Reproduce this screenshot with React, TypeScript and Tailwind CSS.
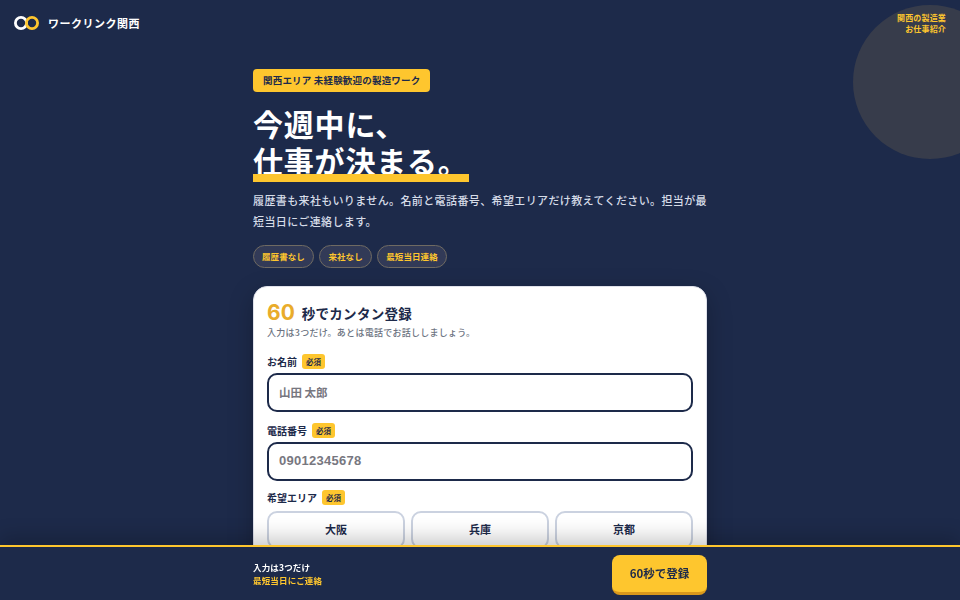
const jp = "font-['Noto_Sans_CJK_JP','Noto_Sans',sans-serif]";

function Logo() {
  return (
    <svg width="25" height="14" viewBox="0 0 25 14" fill="none">
      <circle cx="7" cy="7" r="5.6" stroke="#ffffff" strokeWidth="2.8" />
      <circle cx="18" cy="7" r="5.6" stroke="#fec62e" strokeWidth="2.8" />
    </svg>
  );
}

function Required() {
  return (
    <span className="flex h-[15px] w-[23px] items-center justify-center rounded-[3px] bg-[#fec62e] text-[7.5px] font-bold text-[#1d2a4a]">
      必須
    </span>
  );
}

function FieldLabel({ label }: { label: string }) {
  return (
    <div className="flex items-center gap-[5px]">
      <span className="text-[10px] font-bold text-[#1d2a4a]">{label}</span>
      <Required />
    </div>
  );
}

function TextField({ placeholder, latin }: { placeholder: string; latin?: boolean }) {
  return (
    <div className="mt-[4px] flex h-[39px] items-center rounded-[10px] border-2 border-[#1d2a4a] bg-white px-[10px]">
      <span
        className={
          latin
            ? "font-['Liberation_Sans',sans-serif] text-[13px] font-bold tracking-[0.02em] text-[#77777f]"
            : "text-[11.5px] font-bold text-[#77777f]"
        }
      >
        {placeholder}
      </span>
    </div>
  );
}

export default function App() {
  return (
    <div className={`relative h-screen overflow-hidden bg-[#1d2a4a] ${jp}`}>
      <div className="absolute left-[853px] top-[5px] h-[154px] w-[154px] rounded-full bg-[#373c4b]" />

      <header className="relative flex items-start justify-between pl-[14px] pr-[14px] pt-[12px]">
        <div className="flex h-[22px] items-center gap-[9px]">
          <Logo />
          <span className="text-[11px] font-bold tracking-[0.045em] text-white">ワークリンク関西</span>
        </div>
        <div className="text-right text-[8px] font-bold leading-[11px] tracking-[0.02em] text-[#fec62e]">
          関西の製造業
          <br />
          お仕事紹介
        </div>
      </header>

      <main className="relative mx-auto mt-[31px] w-[454px]">
        <div className="inline-flex h-[23px] items-center rounded-[4px] bg-[#fec62e] px-[10px] text-[9.5px] font-bold tracking-[0.02em] text-[#1d2a4a]">
          関西エリア 未経験歓迎の製造ワーク
        </div>

        <h1 className="mt-[13px] text-[30px] font-bold leading-[37px] tracking-[0.027em] text-white">
          <span className="block">今週中に、</span>
          <span className="relative block w-fit">
            仕事が決まる。
            <span className="absolute inset-x-0 bottom-[-3px] h-[8px] bg-[#fec62e]" />
          </span>
        </h1>

        <p className="mt-[11px] text-[11px] font-medium leading-[21px] tracking-[0.035em] text-[#d6dce8]">
          履歴書も来社もいりません。名前と電話番号、希望エリアだけ教えてください。担当が最短当日にご連絡します。
        </p>

        <div className="mt-[13px] flex gap-[5.5px]">
          {["履歴書なし", "来社なし", "最短当日連絡"].map((chip) => (
            <span
              key={chip}
              className="flex h-[23px] items-center rounded-full border border-[#6f6a62] bg-[#323a57] px-[8px] text-[8.5px] font-bold tracking-[0.01em] text-[#fec62e]"
            >
              {chip}
            </span>
          ))}
        </div>

        <section className="mt-[18px] rounded-t-[14px] border border-[#dfe1ea] bg-white px-[13px] pb-[60px] pt-[13px] shadow-[0_8px_24px_rgba(0,0,0,0.25)]">
          <div className="flex items-center gap-[7px]">
            <span className="font-['Inter',sans-serif] text-[21px] font-bold leading-[26px] text-[#e9ac2b]">60</span>
            <span className="mt-[1px] text-[13.5px] font-bold tracking-[0.02em] text-[#1d2a4a]">秒でカンタン登録</span>
          </div>
          <p className="text-[9px] font-medium leading-[14px] tracking-[0.03em] text-[#6b7280]">
            入力は3つだけ。あとは電話でお話ししましょう。
          </p>

          <div className="mt-[14px]">
            <FieldLabel label="お名前" />
            <TextField placeholder="山田 太郎" />
          </div>
          <div className="mt-[11px]">
            <FieldLabel label="電話番号" />
            <TextField placeholder="09012345678" latin />
          </div>
          <div className="mt-[9px]">
            <FieldLabel label="希望エリア" />
            <div className="mt-[6px] grid grid-cols-3 gap-[6px]">
              {["大阪", "兵庫", "京都"].map((area) => (
                <div
                  key={area}
                  className="flex h-[38px] items-center justify-center rounded-[10px] border-2 border-[#cbd2e0] bg-white text-[11px] font-bold text-[#1d2a4a]"
                >
                  {area}
                </div>
              ))}
            </div>
          </div>
        </section>
      </main>

      <footer className="fixed inset-x-0 bottom-0 h-[55px] border-t-2 border-[#fec62e] bg-[#1d2a4a] shadow-[0_-8px_20px_rgba(0,0,0,0.2)]">
        <div className="mx-auto flex h-full w-[454px] items-center justify-between">
          <div className="text-[8.5px] font-bold leading-[13px] tracking-[0.02em]">
            <div className="text-white">入力は3つだけ</div>
            <div className="text-[#fec62e]">最短当日にご連絡</div>
          </div>
          <div className="mt-[3px] flex h-[40px] w-[95px] items-center justify-center rounded-[8px] border-b-[3px] border-[#d9981c] bg-[#fec62e] text-[11.5px] font-bold text-[#1d2a4a]">
            60秒で登録
          </div>
        </div>
      </footer>
    </div>
  );
}
